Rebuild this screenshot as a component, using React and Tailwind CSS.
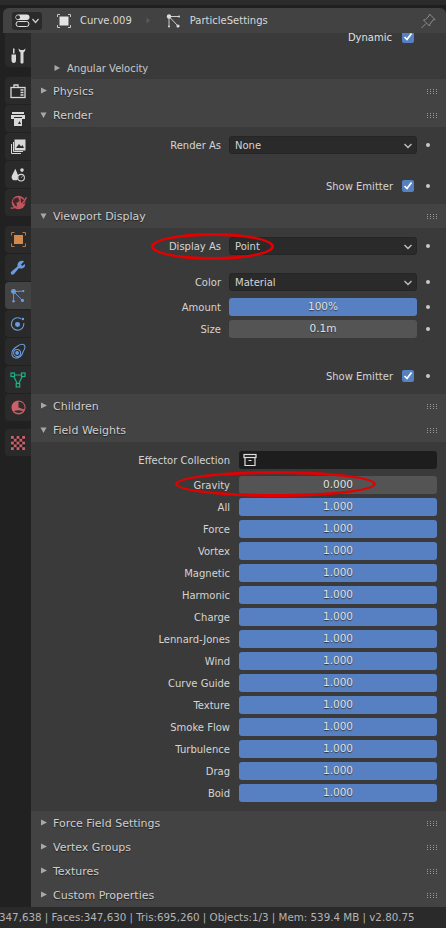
import React from 'react';

const font = { fontFamily: '"DejaVu Sans", sans-serif' };

const Chevron = () => (
  <svg width="10" height="10" viewBox="0 0 10 10" className="absolute right-[3px] top-[4px]">
    <path d="M1.5 3 L5 6.5 L8.5 3" fill="none" stroke="#c4c4c4" strokeWidth="1.3" />
  </svg>
);

const Dot = () => <div className="w-[4px] h-[4px] rounded-full bg-[#c8c8c8]" />;

const Grip = () => (
  <div className="grid grid-cols-4 gap-x-[2px] gap-y-[1px] w-[10px]">
    {Array.from({ length: 12 }).map((_, i) => (
      <div key={i} className="w-[1px] h-[1px] bg-[#9a9a9a]" />
    ))}
  </div>
);

const PanelHeader = ({ title, open }) => (
  <div className="h-[24px] bg-[#434343] flex items-center pl-[9px] pr-[9px] shrink-0">
    <svg width="8" height="8" viewBox="0 0 8 8" className="mr-[5px]">
      {open ? <path d="M0.5 1.5 H6.5 L3.5 7 Z" fill="#a8a8a8" /> : <path d="M1 0.5 L7 3.5 L1 6.5 Z" fill="#a8a8a8" />}
    </svg>
    <span className="pt-[2px] text-[11px] text-[#cfcfcf] flex-1 [text-shadow:0_1px_1px_#222]">{title}</span>
    <Grip />
  </div>
);

const Select = ({ value }) => (
  <div className="relative h-[18px] rounded-[3px] bg-[#2a2a2a] border border-[#252525] flex items-center pl-[5px] text-[10px] text-[#d4d4d4]">
    {value}
    <Chevron />
  </div>
);

const Label = ({ children, className }) => (
  <div className={`text-right text-[10px] text-[#d4d4d4] ${className}`}>{children}</div>
);

const Check = () => (
  <div className="w-[12px] h-[12px] rounded-[2px] bg-[#5680c2] flex items-center justify-center">
    <svg width="10" height="10" viewBox="0 0 10 10">
      <path d="M1.5 5 L4 7.5 L8.5 1.5" fill="none" stroke="#fff" strokeWidth="1.7" />
    </svg>
  </div>
);

const RenderRow = ({ label, children, className = '' }) => (
  <div className={`flex items-center h-[18px] ${className}`}>
    <Label className="w-[190px]">{label}</Label>
    <div className="ml-[8px] w-[188px] shrink-0">{children}</div>
    <div className="ml-[9px]"><Dot /></div>
  </div>
);

const CheckRow = ({ label, className = '' }) => (
  <div className={`flex items-center justify-end h-[18px] pr-[16px] gap-[9px] ${className}`}>
    <span className="text-[10px] text-[#d4d4d4]">{label}</span>
    <Check />
    <div className="ml-[3px]"><Dot /></div>
  </div>
);

const Slider = ({ value, blue }) => (
  <div className={`h-[18px] rounded-[3px] flex items-center justify-center text-[10.5px] text-[#e2e2e2] [text-shadow:0_1px_1px_#333] ${blue ? 'bg-[#5680c2]' : 'bg-[#545454]'}`}>
    {value}
  </div>
);

const weights = ['All', 'Force', 'Vortex', 'Magnetic', 'Harmonic', 'Charge', 'Lennard-Jones', 'Wind', 'Curve Guide', 'Texture', 'Smoke Flow', 'Turbulence', 'Drag', 'Boid'];

const WeightRow = ({ label, children, className = 'mb-[4px]' }) => (
  <div className={`flex items-center h-[18px] ${className}`}>
    <Label className="w-[199px]">{label}</Label>
    <div className="ml-[9px] w-[198px] shrink-0">{children}</div>
  </div>
);

const Tab = ({ children, active, className = 'h-[27px] mb-[1px]' }) => (
  <div className={`w-[26px] rounded-l-[4px] flex items-center justify-center ${active ? 'bg-[#434343]' : 'bg-[#2a2a2a]'} ${className}`}>
    {children}
  </div>
);

const Tabs = () => (
  <div className="w-[31px] shrink-0 bg-[#212121] pl-[5px] flex flex-col">
    <Tab className="h-[34px] mb-[10px] pt-[11px] rounded-tl-none">
      <svg width="16" height="16" viewBox="0 0 16 16" fill="#d8d8d8">
        <path d="M3 0.5 h1.5 v5 H3 Z M1.5 6.5 h4.5 v5.5 q0 3 -2.2 3 q-2.3 0 -2.3 -3 Z" />
        <path d="M8.5 0.5 q0 3 2 4 V14.5 q0 1 1 1 h1 q1 0 1 -1 V4.5 q2 -1 2 -4 l-2 1.5 h-3 Z" />
      </svg>
    </Tab>
    <Tab>
      <svg width="16" height="16" viewBox="0 0 16 16" fill="none" stroke="#d8d8d8" strokeWidth="1.3">
        <rect x="1" y="4.5" width="14" height="10" />
        <path d="M4 4 V2 h4 v2" />
        <path d="M10.5 7 h3 M10.5 9.5 h3 M10.5 12 h3" />
      </svg>
    </Tab>
    <Tab>
      <svg width="16" height="16" viewBox="0 0 16 16" fill="#d8d8d8">
        <path d="M2 1 h12 v2 H2 Z M1 4 h14 v4 h-3 V6 H4 v2 H1 Z" />
        <path d="M4 7 h8 v8 H4 Z M8 13 h3 l-1.5 -3 Z" fillRule="evenodd" />
      </svg>
    </Tab>
    <Tab>
      <svg width="16" height="16" viewBox="0 0 16 16" fill="none" stroke="#d8d8d8" strokeWidth="1">
        <rect x="5" y="1" width="10" height="10" fill="#d8d8d8" />
        <path d="M6 9 L9 5 L11 7.5 L12.5 6 L14 9 Z" fill="#2a2a2a" stroke="none" />
        <path d="M3.5 3 V12.5 H13 M1.5 5 V14.5 H11" />
      </svg>
    </Tab>
    <Tab>
      <svg width="16" height="16" viewBox="0 0 18 18">
        <path d="M6 2 L2 10 Q1 15 6 15 Q10 15 9.5 10 Z" fill="#d8d8d8" />
        <circle cx="13.5" cy="3.5" r="2" fill="#d8d8d8" />
        <circle cx="12.5" cy="12" r="3.7" fill="#2a2a2a" stroke="#d8d8d8" strokeWidth="1.2" />
        <path d="M12.5 12 L14 10.5" stroke="#d8d8d8" />
      </svg>
    </Tab>
    <Tab className="h-[27px] mb-[10px]">
      <svg width="19" height="19" viewBox="0 0 18 18">
        <circle cx="9" cy="9" r="6.5" fill="#c1555f" />
        <path d="M4.5 5.5 L8.5 4 L10 7.5 L7 9.5 L8 14 L5.5 11.5 L3.5 8 Z M11 4.5 L14.5 7 L15 10 L11.5 10.5 Z" fill="#40282b" />
        <path d="M1.5 14 Q5 15 10 12 Q15 8 16.5 4" fill="none" stroke="#c1555f" strokeWidth="1.2" />
      </svg>
    </Tab>
    <Tab>
      <svg width="15" height="15" viewBox="0 0 15 15">
        <rect x="3" y="3" width="9" height="9" fill="#d08a4c" />
        <path d="M0.5 3.5 V0.5 H3.5 M11.5 0.5 H14.5 V3.5 M14.5 11.5 V14.5 H11.5 M3.5 14.5 H0.5 V11.5" fill="none" stroke="#b87a44" strokeWidth="1" />
      </svg>
    </Tab>
    <Tab>
      <svg width="16" height="16" viewBox="0 0 16 16">
        <path d="M10.5 1 Q13 0.5 14 1.5 L11 4.5 L12 6 L15 4 Q15.5 7 13 8 Q11 9 9 8 L4 14 Q2 15.5 1 14 Q0 12.5 2 11 L7.5 6.5 Q7 2 10.5 1 Z" fill="#6b9ce0" />
      </svg>
    </Tab>
    <Tab active>
      <svg width="16" height="16" viewBox="0 0 18 18" fill="#6b9ce0" stroke="#6b9ce0">
        <circle cx="4" cy="4" r="2.8" stroke="none" />
        <circle cx="15" cy="3.5" r="1.2" stroke="none" />
        <circle cx="14" cy="14" r="1.8" stroke="none" />
        <circle cx="4" cy="15" r="1.4" stroke="none" />
        <path d="M4 4 L15 3.5 M4 4 L14 14 M4 4 V15" strokeWidth="1" />
      </svg>
    </Tab>
    <Tab>
      <svg width="16" height="16" viewBox="0 0 18 18" fill="none" stroke="#6b9ce0" strokeWidth="1.3">
        <path d="M12.5 3.2 A7 7 0 1 0 15.5 8" />
        <circle cx="8.5" cy="9.5" r="2.8" fill="#6b9ce0" stroke="none" />
        <circle cx="14.5" cy="3.5" r="1.4" fill="#6b9ce0" stroke="none" />
      </svg>
    </Tab>
    <Tab>
      <svg width="17" height="17" viewBox="0 0 18 18" fill="none" stroke="#6b9ce0" strokeWidth="1.1">
        <path d="M2 11 Q2 7 7 4 Q12 0 15 2 Q17 5 14 9 Q12 16 6 16 Q2 15 2 11 Z" />
        <circle cx="7.5" cy="10.5" r="3.7" />
        <circle cx="7.5" cy="10.5" r="1.4" fill="#6b9ce0" />
      </svg>
    </Tab>
    <Tab>
      <svg width="16" height="16" viewBox="0 0 16 16" fill="none" stroke="#1fb088" strokeWidth="1.2">
        <path d="M3 3 H13 L8 13 Z" />
        <rect x="1" y="1" width="3.5" height="3.5" fill="#2a2a2a" />
        <rect x="11.5" y="1" width="3.5" height="3.5" fill="#2a2a2a" />
        <rect x="6.2" y="11.5" width="3.5" height="3.5" fill="#2a2a2a" />
      </svg>
    </Tab>
    <Tab className="h-[27px] mb-[8px]">
      <svg width="15" height="15" viewBox="0 0 16 16">
        <circle cx="8" cy="8" r="7.5" fill="#c9616a" />
        <path d="M8 1.5 A6.5 6.5 0 0 1 14.5 8 L14 10 L8 8 Z" fill="#2e2e2e" />
        <path d="M3 12 Q8 15.5 13 12 Q8 10 3 12 Z" fill="#2e2e2e" />
      </svg>
    </Tab>
    <Tab>
      <svg width="14" height="14" viewBox="0 0 14 14">
        <rect width="14" height="14" fill="#c9616a" />
        {[0, 1, 2, 3, 4].map((r) =>
          [0, 1, 2, 3, 4].map((c) =>
            (r + c) % 2 === 1 ? <rect key={`${r}-${c}`} x={c * 2.8} y={r * 2.8} width="2.8" height="2.8" fill="#1f1f1f" /> : null
          )
        )}
      </svg>
    </Tab>
  </div>
);

export default function App() {
  return (
    <div style={font} className="w-[446px] h-[928px] bg-[#212121] flex flex-col overflow-hidden relative">
      <div className="h-[5px] shrink-0 bg-[#2b2b2b]" />
      <div className="h-[3px] shrink-0 bg-[#1f1f1f]" />

      <div className="h-[25px] shrink-0 bg-[#424242] rounded-t-[6px] ml-[3px] flex items-center text-[10px] text-[#d8d8d8] relative z-10">
        <div className="ml-[9px] w-[30px] h-[18px] rounded-[3px] bg-[#2a2a2a] flex items-center justify-center gap-[2px]">
          <svg width="15" height="13" viewBox="0 0 15 13">
            <rect x="0.5" y="0.5" width="14" height="5.5" rx="2.7" fill="#e0e0e0" />
            <circle cx="3" cy="3.2" r="2" fill="#2a2a2a" />
            <rect x="1" y="7.5" width="13" height="5" rx="2.5" fill="none" stroke="#e0e0e0" />
          </svg>
          <svg width="7" height="6" viewBox="0 0 7 6"><path d="M0.5 1 L3.5 4.5 L6.5 1" fill="none" stroke="#cfcfcf" strokeWidth="1.2" /></svg>
        </div>
        <svg width="14" height="14" viewBox="0 0 14 14" className="ml-[15px]">
          <rect x="2.5" y="2.5" width="9" height="9" fill="#e4e4e4" />
          <path d="M0.5 3 V0.5 H3 M11 0.5 H13.5 V3 M13.5 11 V13.5 H11 M3 13.5 H0.5 V11" fill="none" stroke="#c8c8c8" />
        </svg>
        <span className="ml-[9px]">Curve.009</span>
        <svg width="5" height="7" viewBox="0 0 5 7" className="ml-[14px]"><path d="M0.5 0.5 L4 3.5 L0.5 6.5 Z" fill="#5a5a5a" /></svg>
        <svg width="15" height="14" viewBox="0 0 15 14" className="ml-[15px]" fill="#dcdcdc" stroke="#dcdcdc">
          <circle cx="3" cy="2.5" r="2.2" stroke="none" />
          <circle cx="13" cy="2.5" r="1" stroke="none" />
          <circle cx="12" cy="12" r="1.6" stroke="none" />
          <circle cx="3" cy="12.5" r="1" stroke="none" />
          <path d="M3 2.5 H13 M3 2.5 L12 12 M3 2.5 V12.5" strokeWidth="0.9" />
        </svg>
        <span className="ml-[9px] flex-1">ParticleSettings</span>
        <svg width="16" height="16" viewBox="0 0 16 16" className="mr-[10px]" fill="none" stroke="#8c8c8c">
          <path d="M9.5 1 L15 6.5 L13 7 L10 11 L9.5 13 L3.5 7 L5.5 6.5 L9 3 Z M6 10.5 L1.5 15" />
        </svg>
      </div>

      <div className="flex flex-1 min-h-0">
        <Tabs />
        <div className="flex-1 min-w-0 flex flex-col bg-[#3a3a3a] rounded-br-[6px]">
          <div className="h-[46px] shrink-0">
            <div className="flex items-center justify-end gap-[10px] pr-[32px] h-[18px] mt-[-5px] text-[10px] text-[#e0e0e0]">
              Dynamic
              <Check />
            </div>
            <div className="flex items-center pl-[23px] mt-[12px] h-[20px] text-[10px] text-[#c8c8c8]">
              <svg width="7" height="8" viewBox="0 0 7 8" className="mr-[6px]"><path d="M0.5 1 L6 4 L0.5 7 Z" fill="#a8a8a8" /></svg>
              Angular Velocity
            </div>
          </div>

          <PanelHeader title="Physics" />
          <PanelHeader title="Render" open />
          <div className="h-[77px] shrink-0 pt-[9px]">
            <RenderRow label="Render As"><Select value="None" /></RenderRow>
            <CheckRow label="Show Emitter" className="mt-[23px]" />
          </div>

          <PanelHeader title="Viewport Display" open />
          <div className="h-[166px] shrink-0 pt-[9px]">
            <RenderRow label="Display As"><Select value="Point" /></RenderRow>
            <RenderRow label="Color" className="mt-[18px]"><Select value="Material" /></RenderRow>
            <RenderRow label="Amount" className="mt-[7px]"><Slider value="100%" blue /></RenderRow>
            <RenderRow label="Size" className="mt-[4px]"><Slider value="0.1m" /></RenderRow>
            <CheckRow label="Show Emitter" className="mt-[29px]" />
          </div>

          <PanelHeader title="Children" />
          <PanelHeader title="Field Weights" open />
          <div className="h-[369px] shrink-0 pt-[9px]">
            <WeightRow label="Effector Collection" className="mb-[7px]">
              <div className="h-[18px] rounded-[3px] bg-[#1d1d1d] flex items-center pl-[4px]">
                <svg width="14" height="14" viewBox="0 0 14 14" fill="none" stroke="#e0e0e0" strokeWidth="1.2">
                  <rect x="1" y="1.5" width="12" height="3" />
                  <path d="M2 4.5 V12.5 H12 V4.5 M5.5 7.5 H8.5" />
                </svg>
              </div>
            </WeightRow>
            <WeightRow label="Gravity"><Slider value="0.000" /></WeightRow>
            {weights.map((w) => (
              <WeightRow key={w} label={w}><Slider value="1.000" blue /></WeightRow>
            ))}
          </div>

          <PanelHeader title="Force Field Settings" />
          <PanelHeader title="Vertex Groups" />
          <PanelHeader title="Textures" />
          <PanelHeader title="Custom Properties" />
        </div>
      </div>

      <div className="h-[21px] shrink-0 bg-[#2a2a2a] whitespace-nowrap overflow-hidden flex items-center text-[10.3px] text-[#b4b4b4]">
        <span className="ml-[-1px]">347,638 | Faces:347,630 | Tris:695,260 | Objects:1/3 | Mem: 539.4 MB | v2.80.75</span>
      </div>

      <div className="absolute z-20 left-[151px] top-[233px] w-[123px] h-[27px] rounded-[50%] border-[3px] border-[#e40000]" />
      <div className="absolute z-20 left-[175px] top-[471px] w-[201px] h-[26px] rounded-[50%] border-[3px] border-[#e40000]" />
    </div>
  );
}
